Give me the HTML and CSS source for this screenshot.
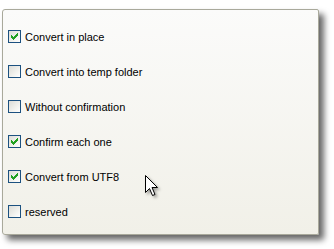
FILE: index.html
```html
<!DOCTYPE html>
<html>
<head>
<meta charset="utf-8">
<link rel="stylesheet" href="styles.css">
</head>
<body>
<div class="panel">
  <div class="row"><span class="box checked"><svg viewBox="0 0 7 7" width="7" height="7" shape-rendering="crispEdges"><path d="M6 0h1v1h-1z M5 1h2v1h-2z M0 2h1v1h-1z M4 2h3v1h-3z M0 3h2v1h-2z M3 3h3v1h-3z M0 4h5v1h-5z M1 5h3v1h-3z M2 6h1v1h-1z" fill="#21a121"/></svg></span><span class="label">Convert in place</span></div>
  <div class="row"><span class="box"></span><span class="label">Convert into temp folder</span></div>
  <div class="row"><span class="box"></span><span class="label">Without confirmation</span></div>
  <div class="row"><span class="box checked"><svg viewBox="0 0 7 7" width="7" height="7" shape-rendering="crispEdges"><path d="M6 0h1v1h-1z M5 1h2v1h-2z M0 2h1v1h-1z M4 2h3v1h-3z M0 3h2v1h-2z M3 3h3v1h-3z M0 4h5v1h-5z M1 5h3v1h-3z M2 6h1v1h-1z" fill="#21a121"/></svg></span><span class="label">Confirm each one</span></div>
  <div class="row"><span class="box checked"><svg viewBox="0 0 7 7" width="7" height="7" shape-rendering="crispEdges"><path d="M6 0h1v1h-1z M5 1h2v1h-2z M0 2h1v1h-1z M4 2h3v1h-3z M0 3h2v1h-2z M3 3h3v1h-3z M0 4h5v1h-5z M1 5h3v1h-3z M2 6h1v1h-1z" fill="#21a121"/></svg></span><span class="label">Convert from UTF8</span></div>
  <div class="row"><span class="box"></span><span class="label">reserved</span></div>
  <svg class="cursor" width="14" height="22" viewBox="0 0 14 22"><path d="M0.5 0.5 L0.5 17.5 L4.5 13.5 L7.5 20.5 L10 19.5 L7 12.5 L12.5 12.5 Z" fill="#fff" stroke="#000" stroke-width="1" stroke-linejoin="miter"/></svg>
</div>
</body>
</html>
```
FILE: styles.css
```css
html, body {
  margin: 0;
  padding: 0;
  background: #fff;
}
body {
  width: 334px;
  height: 249px;
  overflow: hidden;
  font-family: "Liberation Sans", Arial, sans-serif;
  font-size: 11px;
  color: #000;
}
.panel {
  position: relative;
  box-sizing: border-box;
  margin: 9px 0 0 2px;
  width: 317px;
  height: 226px;
  border: 1px solid #a9a99b;
  border-radius: 3px 2px 2px 3px;
  background: linear-gradient(#fbfbfa, #f1f0e8);
  box-shadow: 5px 5px 6px rgba(0, 0, 0, 0.6);
  padding: 20px 0 0 5px;
  display: flex;
  flex-direction: column;
  gap: 22px;
}
.row {
  display: flex;
  align-items: center;
  height: 13px;
}
.box {
  box-sizing: border-box;
  width: 13px;
  height: 13px;
  border: 1px solid #1c5180;
  background: linear-gradient(135deg, #dcdcd7 0%, #f2f2ee 60%, #ffffff 100%);
  display: flex;
  align-items: center;
  justify-content: center;
  flex: none;
}
.label {
  margin-left: 4px;
  line-height: 12px;
  white-space: nowrap;
}
.cursor {
  position: absolute;
  left: 142px;
  top: 165px;
  filter: drop-shadow(2px 2px 1.5px rgba(0, 0, 0, 0.35));
}
```
